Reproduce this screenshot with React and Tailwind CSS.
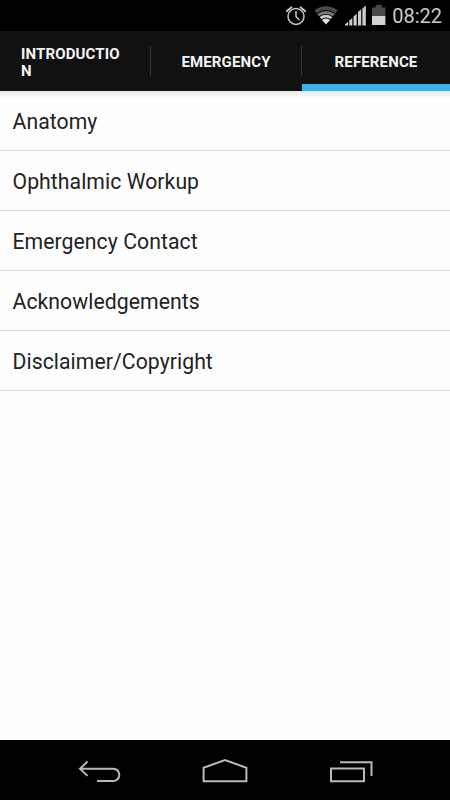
import React, { useState } from 'react'

const TABS = [
  { id: 'introduction', label: 'INTRODUCTION', items: [] },
  { id: 'emergency', label: 'EMERGENCY', items: [] },
  {
    id: 'reference',
    label: 'REFERENCE',
    items: ['Anatomy', 'Ophthalmic Workup', 'Emergency Contact', 'Acknowledgements', 'Disclaimer/Copyright'],
  },
]

export default function App() {
  const [active, setActive] = useState('reference')
  const tab = TABS.find((t) => t.id === active)

  return (
    <div className="flex h-screen w-full flex-col overflow-hidden bg-[#fefefe] font-['Roboto',sans-serif]">
      <StatusBar />
      <TabBar active={active} onSelect={setActive} />
      <ul className="flex-1 bg-linear-to-b from-[#e8e8e8] to-[#fefefe] to-[8px]">
        {tab.items.map((item) => (
          <li key={item} className="flex h-[60px] items-center border-b border-[#dcdcdc] px-[12.5px] pt-[3px]">
            <span className="text-[21.2px] leading-none tracking-[0.06px] text-[#222222]">{item}</span>
          </li>
        ))}
      </ul>
      <NavBar />
    </div>
  )
}

function StatusBar() {
  return (
    <div className="flex h-[31px] shrink-0 items-center justify-end bg-black pr-2">
      <svg width="104" height="31" viewBox="284 0 104 31" fill="none">
        {/* alarm */}
        <g stroke="#c8c8c8" strokeWidth="1.5" strokeLinecap="round">
          <circle cx="296" cy="16.4" r="8" />
          <path d="M296 11.5v5l3 3.2" />
          <path d="M286.8 11.2l4.6-4M305.2 11.2l-4.6-4" strokeWidth="1.8" />
        </g>
        {/* wifi: dim outer arcs, lit inner ones */}
        <path d="M314.3 10.2Q326 2.2 337.7 10.2L335.3 13.2Q326 7 316.7 13.2Z" fill="#4b4b4b" />
        <path d="M317.2 13.9Q326 8 334.8 13.9L332.9 16.2Q326 11.6 319.1 16.2Z" fill="#777777" />
        <path d="M319.6 16.9Q326 12.4 332.4 16.9L330.6 19.1Q326 16 321.4 19.1Z" fill="#c8c8c8" />
        <path d="M322 19.9Q326 17.2 330 19.9L326 24.6Z" fill="#e2e2e2" />
        {/* signal */}
        <path d="M345 25.5v-1.2l3.2-2.6v3.8ZM349.3 25.5v-5l3-2.6v7.6ZM353.5 25.5v-9l3.2-2.8v11.8ZM358 25.5V12l3.2-2.8v16.3ZM362.4 25.5V8.4l3.4-3v20.1Z" fill="#cdcdcd" />
        {/* battery */}
        <path d="M372 7.5h3.6V5h6.2v2.5h3.6V16H372Z" fill="#484848" />
        <path d="M372 16h13.4v9H372Z" fill="#d2d2d2" />
      </svg>
      <span className="ml-[4px] mt-px text-[20px] leading-none text-[#cbcbcb]">08:22</span>
    </div>
  )
}

function TabBar({ active, onSelect }) {
  return (
    <div className="flex h-[60px] shrink-0 bg-[#111111]">
      {TABS.map((t, i) => (
        <React.Fragment key={t.id}>
          {i > 0 && <div className="my-[15px] w-px shrink-0 bg-[#363636]" />}
          <button
            onClick={() => onSelect(t.id)}
            className={`flex items-center justify-center border-y-[7px] border-t-transparent px-[21px] pt-[3px] ${i < 2 ? 'w-[150px] shrink-0' : 'flex-1'} ${active === t.id ? 'border-b-[#35b5e9]' : 'border-b-transparent'}`}
          >
            <span className="break-all text-left text-[15px] font-bold leading-[17px] tracking-[0.14px] text-[#f5f5f5]">{t.label}</span>
          </button>
        </React.Fragment>
      ))}
    </div>
  )
}

function NavBar() {
  return (
    <div className="flex h-[60px] shrink-0 items-center justify-center gap-[80px] bg-black">
      <svg width="46" height="60" viewBox="77 740 46 60" fill="none" stroke="#b9b9b9" strokeWidth="2">
        <path d="M88.5 761.5l-7.5 7.2 7.5 7.2M81 768.7h33.4a5.9 6.2 0 0 1 0 12.4H98" />
      </svg>
      <svg width="46" height="60" viewBox="202 740 46 60" fill="none" stroke="#b9b9b9" strokeWidth="2">
        <path d="M203.6 781.2v-13.4l21.4-7.8 21.4 7.8v13.4Z" />
      </svg>
      <svg width="46" height="60" viewBox="328 740 46 60" fill="none" stroke="#b9b9b9" strokeWidth="2">
        <path d="M331 768.5h33v12.7h-33ZM340 762.3h31.5V776" />
      </svg>
    </div>
  )
}
